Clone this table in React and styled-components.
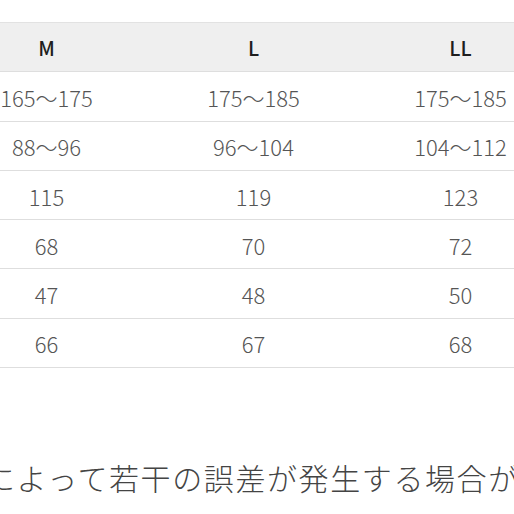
import React from "react";
import styled, { createGlobalStyle } from "styled-components";

const Global = createGlobalStyle`
  html, body { margin: 0; padding: 0; background: #fff; }
  body { width: 514px; height: 514px; overflow: hidden; font-family: "Noto Sans CJK JP", "Noto Sans", sans-serif; }
`;

const Page = styled.div`
  width: 514px;
  height: 514px;
  overflow: hidden;
  padding-top: 22px;
  box-sizing: border-box;
`;

const Table = styled.div`
  display: grid;
  grid-template-columns: repeat(3, 207px);
  width: 621px;
  margin-left: -57px;
  border-top: 1px solid #e2e2e2;
`;

const Cell = styled.div`
  height: 49.3px;
  box-sizing: border-box;
  display: flex;
  align-items: center;
  justify-content: center;
  border-bottom: 1.5px solid #dedede;
  background: ${(p) => (p.$head ? "#efefef" : "#fff")};
  color: ${(p) => (p.$head ? "#1e1e1e" : "#555")};
  font-size: ${(p) => (p.$head ? "20px" : "22px")};
  font-weight: ${(p) => (p.$head ? 500 : 200)};
  padding-top: 1px;
`;

const Note = styled.div`
  margin-top: 92px;
  margin-left: -15px;
  white-space: nowrap;
  font-size: 30px;
  letter-spacing: 1.6px;
  line-height: 34px;
  font-weight: 200;
  color: #444;
`;

const head = ["M", "L", "LL"];
const rows = [
  ["165〜175", "175〜185", "175〜185"],
  ["88〜96", "96〜104", "104〜112"],
  ["115", "119", "123"],
  ["68", "70", "72"],
  ["47", "48", "50"],
  ["66", "67", "68"],
];

export default function App() {
  return (
    <>
      <Global />
      <Page>
        <Table>
          {head.map((h) => (
            <Cell $head key={h}>{h}</Cell>
          ))}
          {rows.map((r, i) =>
            r.map((v, j) => <Cell key={i + "-" + j}>{v}</Cell>)
          )}
        </Table>
        <Note>によって若干の誤差が発生する場合が</Note>
      </Page>
    </>
  );
}
